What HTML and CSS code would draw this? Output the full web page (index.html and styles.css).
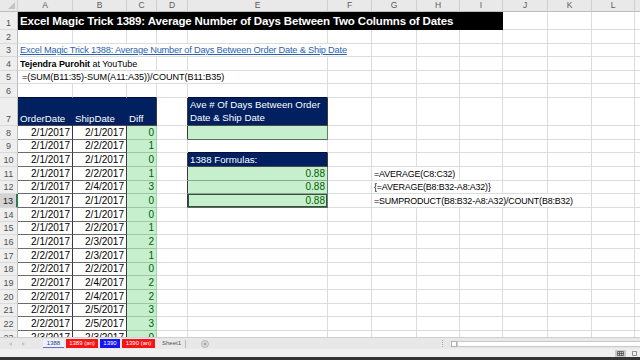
FILE: index.html
```html
<!DOCTYPE html>
<html>
<head>
<meta charset="utf-8">
<link rel="stylesheet" href="styles.css">
</head>
<body>
<div class="app">
  <div class="sheet">
    <table class="grid">
      <colgroup>
        <col class="w-rh"><col class="w-a"><col class="w-b"><col class="w-c"><col class="w-d"><col class="w-e"><col class="w-f"><col class="w-g"><col class="w-h"><col class="w-i"><col class="w-j"><col class="w-k"><col class="w-l"><col class="w-m">
      </colgroup>
      <tr class="r12">
        <th class="corner"><span class="tri"></span></th><th>A</th><th>B</th><th>C</th><th>D</th><th>E</th><th>F</th><th>G</th><th>H</th><th>I</th><th>J</th><th>K</th><th>L</th><th></th>
      </tr>
      <tr class="r18">
        <td class="rh">1</td><td class="title" colspan="9">Excel Magic Trick 1389: Average Number of Days Between Two Columns of Dates</td><td></td><td></td><td></td><td></td>
      </tr>
      <tr class="r14">
        <td class="rh">2</td><td></td><td></td><td></td><td></td><td></td><td></td><td></td><td></td><td></td><td></td><td></td><td></td><td></td>
      </tr>
      <tr class="r13">
        <td class="rh">3</td><td class="link" colspan="6"><span class="u">Excel Magic Trick 1388: Average Number of Days Between Order Date &amp; Ship Date</span></td><td></td><td></td><td></td><td></td><td></td><td></td><td></td>
      </tr>
      <tr class="r14">
        <td class="rh">4</td><td class="txt" colspan="3"><b>Tejendra Purohit</b> at YouTube</td><td></td><td></td><td></td><td></td><td></td><td></td><td></td><td></td><td></td><td></td>
      </tr>
      <tr class="r13">
        <td class="rh">5</td><td class="txt fx" colspan="5">=(SUM(B11:35)-SUM(A11:A35))/COUNT(B11:B35)</td><td></td><td></td><td></td><td></td><td></td><td></td><td></td><td></td>
      </tr>
      <tr class="r14">
        <td class="rh">6</td><td class="top"></td><td class="top"></td><td class="top"></td><td></td><td class="top"></td><td></td><td></td><td></td><td></td><td></td><td></td><td></td><td></td>
      </tr>
      <tr class="r28">
        <td class="rh">7</td><td class="nv">OrderDate</td><td class="nv">ShipDate</td><td class="nv nvc">Diff</td><td class="dl"></td><td class="nv nve">Ave # Of Days Between Order Date &amp; Ship Date</td><td></td><td></td><td></td><td></td><td></td><td></td><td></td><td></td>
      </tr>
      <tr class="r14">
        <td class="rh">8</td><td class="dt">2/1/2017</td><td class="dt">2/1/2017</td><td class="df">0</td><td class="dl"></td><td class="gr gr-last"></td><td></td><td></td><td></td><td></td><td></td><td></td><td></td><td></td>
      </tr>
      <tr class="r13">
        <td class="rh">9</td><td class="dt">2/1/2017</td><td class="dt">2/2/2017</td><td class="df">1</td><td></td><td class="top"></td><td></td><td></td><td></td><td></td><td></td><td></td><td></td><td></td>
      </tr>
      <tr class="r14">
        <td class="rh">10</td><td class="dt">2/1/2017</td><td class="dt">2/1/2017</td><td class="df">0</td><td class="dl"></td><td class="nv nve1">1388 Formulas:</td><td></td><td></td><td></td><td></td><td></td><td></td><td></td><td></td>
      </tr>
      <tr class="r14">
        <td class="rh">11</td><td class="dt">2/1/2017</td><td class="dt">2/2/2017</td><td class="df">1</td><td class="dl"></td><td class="gr">0.88</td><td></td><td class="fm" colspan="2">=AVERAGE(C8:C32)</td><td></td><td></td><td></td><td></td><td></td>
      </tr>
      <tr class="r13">
        <td class="rh">12</td><td class="dt">2/1/2017</td><td class="dt">2/4/2017</td><td class="df">3</td><td class="dl"></td><td class="gr">0.88</td><td></td><td class="fm" colspan="3">{=AVERAGE(B8:B32-A8:A32)}</td><td></td><td></td><td></td><td></td>
      </tr>
      <tr class="r14">
        <td class="rh selrow">13</td><td class="dt">2/1/2017</td><td class="dt">2/1/2017</td><td class="df">0</td><td class="dl"></td><td class="gr gr-last sel">0.88</td><td></td><td class="fm" colspan="5">=SUMPRODUCT(B8:B32-A8:A32)/COUNT(B8:B32)</td><td></td><td></td>
      </tr>
      <tr class="r14">
        <td class="rh">14</td><td class="dt">2/1/2017</td><td class="dt">2/1/2017</td><td class="df">0</td><td></td><td></td><td></td><td></td><td></td><td></td><td></td><td></td><td></td><td></td>
      </tr>
      <tr class="r13">
        <td class="rh">15</td><td class="dt">2/1/2017</td><td class="dt">2/2/2017</td><td class="df">1</td><td></td><td></td><td></td><td></td><td></td><td></td><td></td><td></td><td></td><td></td>
      </tr>
      <tr class="r14">
        <td class="rh">16</td><td class="dt">2/1/2017</td><td class="dt">2/3/2017</td><td class="df">2</td><td></td><td></td><td></td><td></td><td></td><td></td><td></td><td></td><td></td><td></td>
      </tr>
      <tr class="r14">
        <td class="rh">17</td><td class="dt">2/2/2017</td><td class="dt">2/3/2017</td><td class="df">1</td><td></td><td></td><td></td><td></td><td></td><td></td><td></td><td></td><td></td><td></td>
      </tr>
      <tr class="r13">
        <td class="rh">18</td><td class="dt">2/2/2017</td><td class="dt">2/2/2017</td><td class="df">0</td><td></td><td></td><td></td><td></td><td></td><td></td><td></td><td></td><td></td><td></td>
      </tr>
      <tr class="r14">
        <td class="rh">19</td><td class="dt">2/2/2017</td><td class="dt">2/4/2017</td><td class="df">2</td><td></td><td></td><td></td><td></td><td></td><td></td><td></td><td></td><td></td><td></td>
      </tr>
      <tr class="r14">
        <td class="rh">20</td><td class="dt">2/2/2017</td><td class="dt">2/4/2017</td><td class="df">2</td><td></td><td></td><td></td><td></td><td></td><td></td><td></td><td></td><td></td><td></td>
      </tr>
      <tr class="r13">
        <td class="rh">21</td><td class="dt">2/2/2017</td><td class="dt">2/5/2017</td><td class="df">3</td><td></td><td></td><td></td><td></td><td></td><td></td><td></td><td></td><td></td><td></td>
      </tr>
      <tr class="r14">
        <td class="rh">22</td><td class="dt">2/2/2017</td><td class="dt">2/5/2017</td><td class="df">3</td><td></td><td></td><td></td><td></td><td></td><td></td><td></td><td></td><td></td><td></td>
      </tr>
      <tr class="r14">
        <td class="rh">23</td><td class="dt">2/3/2017</td><td class="dt">2/3/2017</td><td class="df">0</td><td></td><td></td><td></td><td></td><td></td><td></td><td></td><td></td><td></td><td></td>
      </tr>
    </table>
  </div>
  <div class="tabbar">
    <div class="nav"><span class="arr arr-l"></span><span class="arr arr-r"></span></div>
    <div class="tabs">
      <span class="tab active t1">1388</span>
      <span class="tab red t2">1389 (an)</span>
      <span class="tab blue t3">1390</span>
      <span class="tab red t4">1390 (an)</span>
      <span class="tab plain">Sheet1</span>
      <span class="sep"></span>
      <span class="add"><svg width="8" height="8" viewBox="0 0 8 8"><circle cx="4" cy="4" r="3.4" fill="none" stroke="#a0a0a0" stroke-width="0.8"/><path d="M4 2.2v3.6M2.2 4h3.6" stroke="#888" stroke-width="0.8"/></svg></span>
    </div>
    <div class="scrollwrap">
      <span class="dots"></span>
      <span class="sbtn"></span>
      <span class="track"></span>
    </div>
  </div>
  <div class="status">
    <div class="views">
      <span class="view on"><svg width="7" height="5" viewBox="0 0 7 5"><path d="M0.5 0.5h6v4h-6z M0.5 2.5h6 M2.5 0.5v4 M4.5 0.5v4" fill="none" stroke="#555" stroke-width="0.8"/></svg></span>
      <span class="view"><svg width="7" height="5" viewBox="0 0 7 5"><path d="M1.5 0.5h4v4h-4z" fill="none" stroke="#777" stroke-width="0.8"/></svg></span>
    </div>
  </div>
  <div class="bottom"></div>
</div>
</body>
</html>
```

FILE: styles.css
```css
* { box-sizing: border-box; }
html, body { margin: 0; padding: 0; }
body {
  width: 640px;
  height: 360px;
  overflow: hidden;
  background: #ffffff;
  font-family: "Liberation Sans", Arial, sans-serif;
}
.app { width: 640px; height: 360px; display: flex; flex-direction: column; }
.sheet { height: 337px; overflow: hidden; flex: none; }

.grid {
  border-collapse: separate;
  border-spacing: 0;
  table-layout: fixed;
  width: 645px;
}
.w-rh { width: 18px; }
.w-a { width: 55px; }
.w-b { width: 54px; }
.w-c { width: 30px; }
.w-d { width: 31px; }
.w-e { width: 140px; }
.w-f { width: 44px; }
.w-g { width: 45px; }
.w-h { width: 43px; }
.w-i { width: 43px; }
.w-j { width: 45px; }
.w-k { width: 44px; }
.w-l { width: 43px; }
.w-m { width: 16px; }

.r12 { height: 12px; }
.r13 { height: 13px; }
.r14 { height: 14px; }
.r18 { height: 18px; }
.r28 { height: 28px; }

.grid td, .grid th {
  padding: 0 2px;
  border-right: 1px solid #dcdcdc;
  border-bottom: 1px solid #dcdcdc;
  white-space: nowrap;
  overflow: hidden;
  vertical-align: bottom;
  font-size: 10px;
  line-height: 12px;
  font-weight: normal;
  color: #000;
}
.grid th {
  background: #e9e9e9;
  color: #5a5a5a;
  font-size: 8.5px;
  line-height: 11px;
  text-align: center;
  vertical-align: middle;
  border-right: 1px solid #cfcfcf;
  border-bottom: 1px solid #bdbdbd;
}
.grid th.corner { position: relative; padding: 0; }
.tri {
  position: absolute;
  right: 2px;
  bottom: 2px;
  width: 0;
  height: 0;
  border-left: 7px solid transparent;
  border-bottom: 7px solid #c4c4c4;
}
.grid td.rh {
  background: #eeeeee;
  color: #505050;
  font-size: 9px;
  line-height: 12px;
  text-align: center;
  padding: 0;
  border-right: 1px solid #bdbdbd;
  border-bottom: 1px solid #dadada;
}
.grid td.selrow {
  background: #d4d4d4;
  color: #222;
  border-right: 2px solid #2f7a4a;
}

.grid td.title {
  background: #000;
  color: #fff;
  font-weight: bold;
  font-size: 11.5px;
  letter-spacing: -0.15px;
  line-height: 16px;
  vertical-align: middle;
  border-right: 1px solid #000;
  border-bottom: 1px solid #000;
}
.grid td.link { color: #2a63b0; font-size: 9.25px; letter-spacing: -0.2px; }
.u { text-decoration: underline; }
.grid td.txt { font-size: 9px; letter-spacing: -0.05px; }
.grid td.fx { padding-left: 4px; font-size: 9.1px; }

.grid td.top { border-bottom: 1px solid #000e3d; }

.grid td.nv {
  background: #002060;
  color: #fff;
  font-size: 9.7px;
  line-height: 12px;
  border-right: 1px solid #002060;
  border-bottom: 1px solid #4a4a4a;
}
.grid td.nvc { border-right: 1px solid #3a3a3a; }
.grid td.nve {
  white-space: normal;
  line-height: 12.5px;
  vertical-align: bottom;
  padding-bottom: 1px;
  border-right: 1px solid #3a3a3a;
}
.grid td.nve1 { border-right: 1px solid #3a3a3a; }

.grid td.dt {
  text-align: right;
  border-right: 1px solid #3a3a3a;
  border-bottom: 1px solid #6a6a6a;
}
.grid td.df {
  background: #c6efce;
  color: #006100;
  text-align: right;
  border-right: 1px solid #a9cfae;
  border-bottom: 1px solid #9fc5a5;
}
.grid td.gr {
  background: #c6efce;
  color: #006100;
  text-align: right;
  border-right: 1px solid #6a7a6c;
  border-bottom: 1px solid #8aa88e;
}
.grid td.gr-last { border-bottom: 1px solid #5a6a5c; }
.grid td.sel { box-shadow: inset 0 0 0 1px #37503b; }
.grid td.fm { font-size: 8.9px; letter-spacing: -0.15px; }
.grid td.dl { border-right: 1px solid #3a3a3a; }

.tabbar {
  height: 12px;
  flex: none;
  background: #e8e8e8;
  border-top: 1px solid #cfcfcf;
  display: flex;
  align-items: center;
  font-size: 6px;
}
.nav { width: 40px; display: flex; align-items: center; gap: 10px; padding-left: 9px; }
.arr { width: 0; height: 0; border-top: 2px solid transparent; border-bottom: 2px solid transparent; }
.arr-l { border-right: 3px solid #c2c2c2; }
.arr-r { border-left: 3px solid #c2c2c2; }
.tabs { display: flex; align-items: center; gap: 2px; padding-left: 3px; width: 402px; }
.tab {
  height: 9px;
  line-height: 9px;
  padding: 0;
  color: #fff;
  white-space: nowrap;
  text-align: center;
}
.t1 { width: 21px; }
.t2 { width: 32px; }
.t3 { width: 20px; }
.t4 { width: 33px; }
.tab.active {
  background: #eef0f8;
  color: #2b3f86;
  border-bottom: 1.5px solid #5c74c4;
}
.tab.red { background: #f81414; }
.tab.blue { background: #1616f2; }
.tab.plain { color: #555; padding-left: 5px; }
.sep { width: 1px; height: 8px; background: #b8b8b8; margin-left: 2px; }
.add { width: 8px; height: 8px; margin-left: 13px; display: flex; }
.scrollwrap { flex: 1; display: flex; align-items: center; }
.dots { width: 1px; height: 7px; border-left: 1px dotted #a8a8a8; margin-right: 8px; }
.sbtn { width: 6px; height: 6px; border: 1px solid #b0b0b0; background: #fff; }
.track { flex: 1; height: 6px; background: #fff; border: 1px solid #c8c8c8; border-right: 0; }

.status {
  height: 8px;
  flex: none;
  background: #f0f0f0;
  display: flex;
  justify-content: flex-end;
  align-items: center;
}
.views { display: flex; gap: 3px; }
.view { width: 11px; height: 7px; display: flex; align-items: center; justify-content: center; }
.view.on { background: #c9c9c9; }
.bottom { height: 3px; flex: none; background: #353535; }
```
